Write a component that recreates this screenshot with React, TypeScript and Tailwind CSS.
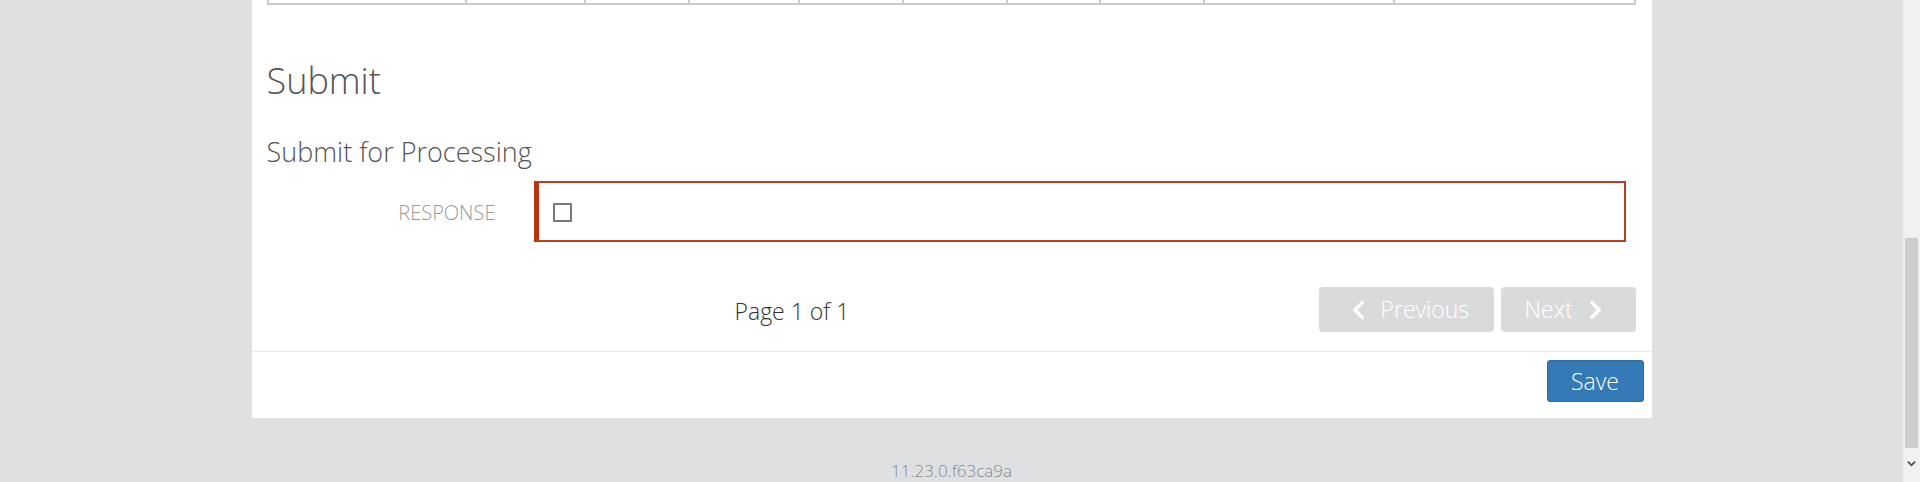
import React from 'react';

const cols = [199, 119, 104, 111, 104, 104, 93, 105, 190, 239];

const ChevronLeft = ({ className }: { className?: string }) => (
  <svg className={className} viewBox="0 0 320 512" fill="currentColor">
    <path d="M34.5 239L228.9 44.7c9.4-9.4 24.6-9.4 33.9 0l22.7 22.7c9.4 9.4 9.4 24.5 0 33.9L131.5 256l154 154.8c9.3 9.4 9.3 24.5 0 33.9l-22.7 22.7c-9.4 9.4-24.6 9.4-33.9 0L34.5 273c-9.4-9.4-9.4-24.6 0-34z" />
  </svg>
);

const ChevronRight = ({ className }: { className?: string }) => (
  <svg className={className} viewBox="0 0 320 512" fill="currentColor">
    <path d="M285.5 273L91.1 467.3c-9.4 9.4-24.6 9.4-33.9 0l-22.7-22.7c-9.4-9.4-9.4-24.5 0-33.9L188.5 256 34.5 101.3c-9.3-9.4-9.3-24.5 0-33.9l22.7-22.7c9.4-9.4 24.6-9.4 33.9 0L285.5 239c9.4 9.4 9.4 24.6 0 34z" />
  </svg>
);

export default function App() {
  return (
    <div className="flex h-[482px] overflow-hidden bg-[#dfe0e2] font-['Open_Sans',sans-serif]">
      <div className="flex flex-1 flex-col items-center">
        <div className="w-[1400px] bg-white">
          <div className="pl-[15px] pr-[16px]">
            {/* tail of the table above */}
            <div className="flex h-[5px] border-x-2 border-b-2 border-[#cbcbcb]">
              {cols.map((w, i) => (
                <div
                  key={i}
                  style={{ width: w }}
                  className={i < cols.length - 1 ? 'border-r-2 border-[#cbcbcb]' : ''}
                />
              ))}
            </div>

            <h2 className="mt-[56px] text-[36px] leading-[40px] font-light text-[#555]">Submit</h2>
            <h3 className="mt-[36px] text-[27px] leading-[30px] font-light text-[#555]">Submit for Processing</h3>

            <div className="mt-[14px] flex items-center">
              <div className="w-[229px] pt-[3px] text-right text-[20px] font-light uppercase text-[#9a9a9a]">Response</div>
              <div className="ml-[38px] mr-[10px] flex h-[61px] flex-1 items-center border-2 border-l-[5px] border-[#ad4423] border-l-[#b8350f] pl-[14px] pt-[2px]">
                <div className="h-[19px] w-[19px] rounded-[1px] border-2 border-[#777] bg-white" />
              </div>
            </div>

            <div className="mt-[45px] flex items-center pb-[19px]">
              <div className="pl-[468px] pt-[4px] text-[23px] font-light text-[#333]">Page 1 of 1</div>
              <div className="flex-1" />
              <div className="flex gap-[7px]">
                <button className="flex h-[45px] w-[175px] items-center rounded-[4px] bg-[#d9dadc] pl-[31px] text-[23px] font-light text-white">
                  <ChevronLeft className="h-[22px] w-[17px]" />
                  <span className="ml-[14px]">Previous</span>
                </button>
                <button className="flex h-[45px] w-[135px] items-center rounded-[4px] bg-[#d9dadc] pl-[24px] text-[23px] font-light text-white">
                  <span>Next</span>
                  <ChevronRight className="ml-[14px] h-[22px] w-[17px]" />
                </button>
              </div>
            </div>
          </div>

          <div className="flex justify-end border-t border-[#e6ecee] pb-[16px] pr-[8px] pt-[8px]">
            <button className="h-[42px] w-[97px] rounded-[3px] border border-[#2e6da4] bg-[#337ab7] text-[23px] font-light text-white">
              Save
            </button>
          </div>
        </div>

        <div className="mt-[41px] text-[17px] leading-[24px] font-light text-[#8a8a8a]">11.23.0.f63ca9a</div>
      </div>

      {/* scrollbar */}
      <div className="relative w-[17px] bg-[#f1f1f1]">
        <div className="absolute left-[2px] top-[238px] h-[210px] w-[13px] bg-[#cdcdcd]" />
        <svg className="absolute bottom-[14px] left-[4px] h-[9px] w-[9px]" viewBox="0 0 10 10" fill="none" stroke="#505050" strokeWidth="2">
          <path d="M1 3l4 4 4-4" />
        </svg>
      </div>
    </div>
  );
}
